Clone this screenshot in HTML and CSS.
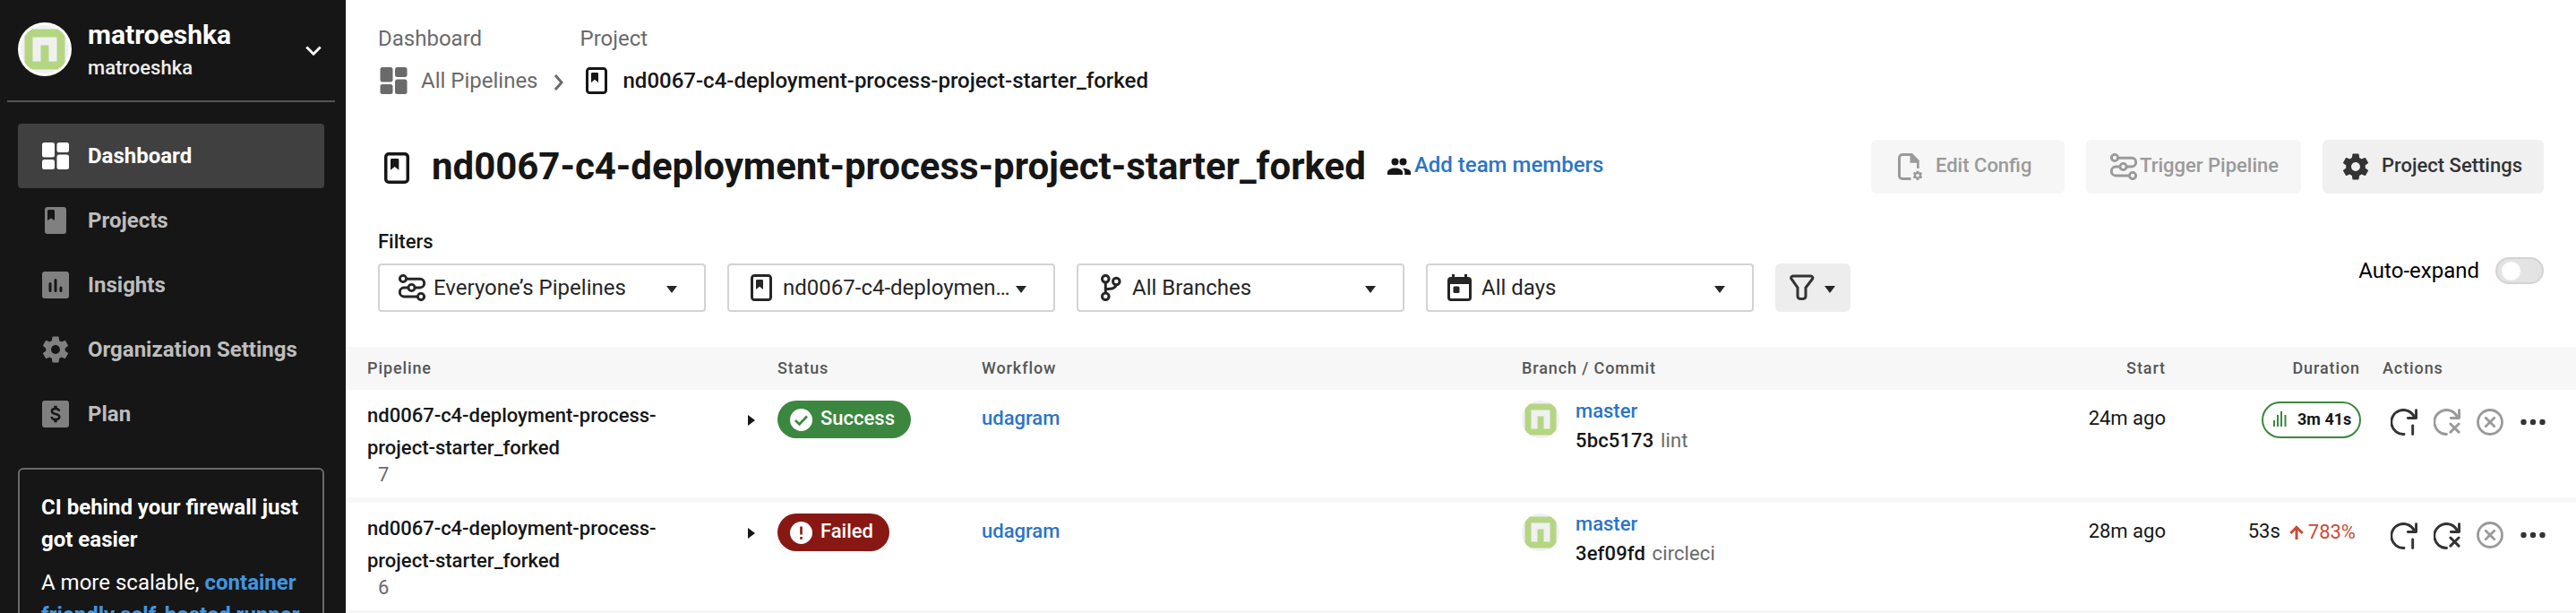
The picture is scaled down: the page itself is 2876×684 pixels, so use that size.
FILE: index.html
```
<!DOCTYPE html>
<html lang="en">
<head>
<meta charset="utf-8">
<title>Pipelines</title>
<link rel="stylesheet" href="styles.css">
</head>
<body>
<svg class="defs" width="0" height="0">
  <symbol id="dash" viewBox="0 0 30 30"><rect width="14" height="16.500" rx="2.500"/><rect y="19" width="14" height="11" rx="2.500"/><rect x="16.500" width="13.500" height="11" rx="2.500"/><rect x="16.500" y="13.500" width="13.500" height="16.500" rx="2.500"/></symbol>
  <symbol id="gear" viewBox="2.2 2 19.6 20"><path d="M19.14 12.94c.04-.3.06-.61.06-.94 0-.32-.02-.64-.07-.94l2.03-1.58c.18-.14.23-.41.12-.61l-1.92-3.32c-.12-.22-.37-.29-.59-.22l-2.39.96c-.5-.38-1.03-.7-1.62-.94l-.36-2.54c-.04-.24-.24-.41-.48-.41h-3.84c-.24 0-.43.17-.47.41l-.36 2.54c-.59.24-1.13.57-1.62.94l-2.39-.96c-.22-.08-.47 0-.59.22L2.74 8.87c-.12.21-.08.47.12.61l2.03 1.58c-.05.3-.09.63-.09.94s.02.64.07.94l-2.03 1.58c-.18.14-.23.41-.12.61l1.92 3.32c.12.22.37.29.59.22l2.39-.96c.5.38 1.03.7 1.62.94l.36 2.54c.05.24.24.41.48.41h3.84c.24 0 .44-.17.47-.41l.36-2.54c.59-.24 1.13-.56 1.62-.94l2.39.96c.22.08.47 0 .59-.22l1.92-3.32c.12-.22.07-.47-.12-.61l-2.01-1.58zM12 15.3c-1.82 0-3.3-1.48-3.3-3.3s1.48-3.3 3.3-3.3 3.3 1.48 3.3 3.3-1.48 3.3-3.3 3.3z"/></symbol>
  <symbol id="book" viewBox="0 0 24 30"><rect x="1.500" y="1.500" width="21" height="27" rx="2.800" fill="none" stroke="currentColor" stroke-width="3"/><path d="M6 7.200a1.200 1.200 0 0 1 1.200-1.200h5.600a1.200 1.200 0 0 1 1.200 1.200V17l-4-3.200L6 17z"/></symbol>
  <symbol id="pipe" viewBox="0 0 30 30"><g fill="none" stroke="currentColor" stroke-width="2.900"><circle cx="5" cy="5" r="3.600"/><circle cx="14.500" cy="15" r="3.600"/><circle cx="25" cy="25" r="3.600"/><path d="M8.500 5.200H24a4.700 4.700 0 0 1 4.600 4.700v.4A4.700 4.700 0 0 1 24 15h-6M11 15H6a4.700 4.700 0 0 0-4.600 4.700v.6A4.700 4.700 0 0 0 6 25h15.500"/></g></symbol>
  <symbol id="rerun" viewBox="0 0 31 31"><g fill="none" stroke="currentColor" stroke-width="3" stroke-linecap="round" stroke-linejoin="round"><path d="M15.500 29.500A14 14 0 1 1 27.500 9.500"/><path d="M29.500 1.800v9H20"/><path d="M25.500 19.500v10"/></g></symbol>
  <symbol id="rerunx" viewBox="0 0 31 31"><g fill="none" stroke="currentColor" stroke-width="3" stroke-linecap="round" stroke-linejoin="round"><path d="M15 29.500A14 14 0 1 1 27.500 9.500"/><path d="M29.500 1.800v9H20"/><path d="M19.500 17.500l9.500 9.500M29 17.500L19.500 27"/></g></symbol>
  <symbol id="cancel" viewBox="0 0 30 30"><g fill="none" stroke="currentColor" stroke-width="2.800" stroke-linecap="round"><circle cx="15" cy="15" r="13.500"/><path d="M10.200 10.200l9.600 9.600M19.800 10.200l-9.600 9.600"/></g></symbol>
  <symbol id="more" viewBox="0 0 28 8"><circle cx="3.500" cy="4" r="3.200"/><circle cx="14" cy="4" r="3.200"/><circle cx="24.500" cy="4" r="3.200"/></symbol>
  <symbol id="avatar" viewBox="0 0 42 42"><circle cx="21" cy="21" r="21" fill="#f0f0f0"/><clipPath id="av"><circle cx="21" cy="21" r="21"/></clipPath><g clip-path="url(#av)"><rect x="3.500" y="3.500" width="35" height="35" fill="#b4d683"/><path d="M10.500 10.500h21v21h-7v-14h-7v14h-7z" fill="#f0f0f0"/></g></symbol>
</svg>
<div class="app">
  <aside class="side">
    <div class="org">
      <span class="ring"><svg width="54" height="54"><use href="#avatar"/></svg></span>
      <div class="names"><b>matroeshka</b><span>matroeshka</span></div>
      <svg class="chev" width="18" height="12" viewBox="0 0 18 12"><path d="M1.300 1.500L9 9.200l7.700-7.700" fill="none" stroke="#fff" stroke-width="2.900"/></svg>
    </div>
    <nav class="nav">
      <a class="item active"><i><svg width="30" height="30"><use href="#dash"/></svg></i>Dashboard</a>
      <a class="item"><i><svg width="24" height="30" viewBox="0 0 24 30"><rect width="24" height="30" rx="3"/><path d="M3 4.500A1.500 1.500 0 0 1 4.500 3h5A1.500 1.500 0 0 1 11 4.500V15l-4-2.500L3 15z" fill="#161616"/></svg></i>Projects</a>
      <a class="item"><i><svg width="30" height="30" viewBox="0 0 30 30"><rect width="30" height="30" rx="3"/><path d="M9 13.500v8M15 9.500v12M21 18v3.500" stroke="#161616" stroke-width="3" stroke-linecap="round"/></svg></i>Insights</a>
      <a class="item"><i><svg width="30" height="30"><use href="#gear"/></svg></i>Organization Settings</a>
      <a class="item"><i><svg width="30" height="30" viewBox="0 0 30 30"><rect width="30" height="30" rx="3"/><path d="M19.200 11.800c-.3-1.800-1.800-2.800-4.200-2.800s-4.100 1-4.100 2.900c0 4.200 8.400 2.100 8.400 6.200 0 2-1.800 3-4.300 3s-4.200-1.100-4.400-3.100" fill="none" stroke="#161616" stroke-width="2.500"/><path d="M15 5.700v3.500M15 20.800v3.500" stroke="#161616" stroke-width="3.400"/></svg></i>Plan</a>
    </nav>
    <div class="promo"><h4>CI behind your firewall just got easier</h4><p>A more scalable, <b>container friendly self-hosted runner</b></p></div>
  </aside>
  <main class="main">
    <div class="crumbs">
      <div class="crumb all"><span class="lab">Dashboard</span><span class="val"><svg width="31" height="30"><use href="#dash"/></svg><span>All Pipelines</span></span></div>
      <svg class="sep" width="12" height="20" viewBox="0 0 12 20"><path d="M2 2l7 8-7 8" fill="none" stroke="#6a6a6a" stroke-width="3"/></svg>
      <div class="crumb cur"><span class="lab">Project</span><span class="val"><svg width="24" height="30"><use href="#book"/></svg><span>nd0067-c4-deployment-process-project-starter_forked</span></span></div>
    </div>
    <div class="titlebar">
      <svg class="ticon" width="28" height="35"><use href="#book"/></svg>
      <h1>nd0067-c4-deployment-process-project-starter_forked</h1>
      <a class="team"><svg width="26" height="20" viewBox="0 0 26 20"><circle cx="8.500" cy="4.500" r="4"/><circle cx="17.500" cy="4.500" r="4"/><path d="M0 19v-2.800c0-3 4.500-4.700 8.500-4.700s8.500 1.700 8.500 4.700V19zM19.300 19v-3c0-1.800-.8-3.200-2.200-4.300 4 0 8.900 1.500 8.900 4.500V19z"/></svg>Add team members</a>
      <div class="acts">
        <span class="btn off cfg"><svg width="28" height="31" viewBox="0 0 28 31"><path d="M14.500 28.500H5A3.500 3.500 0 0 1 1.500 25V5A3.500 3.500 0 0 1 5 1.500h10" fill="none" stroke="currentColor" stroke-width="3"/><path d="M13.500 0H16l7.700 8v9H21v-6.200h-7.500z"/><svg x="16.500" y="19.200" width="11" height="11"><use href="#gear"/></svg></svg>Edit Config</span>
        <span class="btn off trg"><svg width="30" height="30"><use href="#pipe"/></svg>Trigger Pipeline</span>
        <span class="btn set"><svg width="30" height="30"><use href="#gear"/></svg>Project Settings</span>
      </div>
    </div>
    <div class="filters">
      <div class="fgroup">
        <div class="flabel">Filters</div>
        <div class="frow">
          <div class="sel"><svg width="30" height="30"><use href="#pipe"/></svg><span>Everyone’s Pipelines</span><em></em></div>
          <div class="sel proj"><svg width="24" height="30"><use href="#book"/></svg><span>nd0067-c4-deploymen…</span><em></em></div>
          <div class="sel br"><svg width="24" height="30" viewBox="0 0 24 30"><g fill="none" stroke="currentColor" stroke-width="3"><circle cx="5.300" cy="5.200" r="3.800"/><circle cx="17.300" cy="8" r="3.800"/><circle cx="5.300" cy="24.800" r="3.800"/><path d="M5.300 9v12M17.300 11.800c-1.200 4-4.300 4.700-12 4.700"/></g></svg><span>All Branches</span><em></em></div>
          <div class="sel days"><svg width="27" height="30" viewBox="0 0 27 30"><rect x="1.500" y="4.500" width="24" height="24" rx="2.500" fill="none" stroke="currentColor" stroke-width="3"/><path d="M1 4h25v7H1zM5 0h3v5H5zM19 0h3v5h-3z"/><rect x="6.500" y="13.500" width="7" height="7.500" rx="1.500"/></svg><span>All days</span><em></em></div>
          <div class="funnel"><svg width="28" height="30" viewBox="0 0 28 30"><path d="M4 2h19.500c2 0 3 1.900 1.800 3.500L18 15v9.500c0 2-2 3-4.500 3S9 26.500 9 24.500V15L2.200 5.500C1 3.900 2 2 4 2z" fill="none" stroke="currentColor" stroke-width="3"/></svg><em></em></div>
        </div>
      </div>
      <div class="auto">Auto-expand<span class="switch"><i></i></span></div>
    </div>
    <div class="thead grid"><span>Pipeline</span><span></span><span>Status</span><span>Workflow</span><span>Branch / Commit</span><span class="r">Start</span><span class="r">Duration</span><span>Actions</span></div>
    <div class="row grid">
      <div class="pl"><b>nd0067-c4-deployment-process-project-starter_forked</b><small>7</small></div>
      <div class="exp"></div>
      <div><span class="badge ok"><svg width="25" height="25" viewBox="0 0 25 25"><circle cx="12.500" cy="12.500" r="12.500" fill="#fff"/><path d="M6 13l4.500 4.500L19 8.500" fill="none" stroke="#3c8740" stroke-width="2.600"/></svg>Success</span></div>
      <div class="wf">udagram</div>
      <div class="bc"><svg width="42" height="42"><use href="#avatar"/></svg><div><a>master</a><p><b>5bc5173</b> lint</p></div></div>
      <div class="start">24m ago</div>
      <div class="dur"><span class="pill"><svg width="15" height="17" viewBox="0 0 15 17"><path d="M1 10v7M5 4v13M9 0v17M13.500 4v13" stroke="#3c8740" stroke-width="2"/></svg>3m 41s</span></div>
      <div class="icons"><svg width="30" height="30"><use href="#rerun"/></svg><svg class="dim" width="30" height="30"><use href="#rerunx"/></svg><svg class="dim" width="30" height="30"><use href="#cancel"/></svg><svg width="28" height="8"><use href="#more"/></svg></div>
    </div>
    <div class="row grid">
      <div class="pl"><b>nd0067-c4-deployment-process-project-starter_forked</b><small>6</small></div>
      <div class="exp"></div>
      <div><span class="badge bad"><svg width="25" height="25" viewBox="0 0 25 25"><circle cx="12.500" cy="12.500" r="12.500" fill="#fff"/><path d="M12.500 5.500v9M12.500 17v2.700" stroke="#881814" stroke-width="2.600"/></svg>Failed</span></div>
      <div class="wf">udagram</div>
      <div class="bc"><svg width="42" height="42"><use href="#avatar"/></svg><div><a>master</a><p><b>3ef09fd</b> circleci</p></div></div>
      <div class="start">28m ago</div>
      <div class="dur up">53s<span><svg width="16" height="16" viewBox="0 0 16 16"><path d="M8 16V2.500M1.300 9L8 2.300 14.700 9" fill="none" stroke="#cb4a39" stroke-width="3"/></svg>783%</span></div>
      <div class="icons low"><svg width="30" height="30"><use href="#rerun"/></svg><svg width="30" height="30"><use href="#rerunx"/></svg><svg class="dim" width="30" height="30"><use href="#cancel"/></svg><svg width="28" height="8"><use href="#more"/></svg></div>
    </div>
  </main>
</div>
</body>
</html>
```
FILE: styles.css
```
* { box-sizing: border-box; margin: 0; padding: 0; }
body { font-family: Roboto, "Liberation Sans", sans-serif; font-size: 24px; line-height: 36px; color: #161616; background: #fff; width: 2876px; height: 684px; overflow: hidden; }
svg { fill: currentColor; flex: none; display: block; }
.defs { position: absolute; }
.app { display: flex; height: 684px; overflow: hidden; }

.side { width: 386px; flex: none; background: #161616; color: #fff; }
.org { height: 114px; margin: 0 12px 0 8px; border-bottom: 2px solid #555; display: flex; padding: 25px 15px 0 12px; }
.ring { width: 60px; height: 60px; border-radius: 50%; background: #fff; padding: 3px; flex: none; }
.names { margin-left: 18px; margin-top: -5px; flex: 1; }
.names b { display: block; font-size: 30px; line-height: 38px; font-weight: 700; }
.names span { display: block; font-size: 22px; line-height: 36px; color: #eee; font-weight: 500; }
.chev { margin-top: 26px; }
.nav { padding: 24px 24px 0 20px; }
.item { display: flex; align-items: center; height: 72px; border-radius: 4px; padding-left: 20px; font-weight: 700; color: #bdbdbd; }
.item i { width: 44px; margin-right: 14px; display: flex; justify-content: center; color: #808080; }
.item.active { background: #404040; color: #fff; }
.item.active i { color: #fff; }
.promo { margin: 24px 24px 0 20px; border: 2px solid #6a6a6a; border-radius: 6px; height: 240px; padding: 24px 20px 0 24px; }
.promo h4 { font-size: 24px; font-weight: 700; margin-bottom: 12px; }
.promo p b { color: #4196e0; }

.main { flex: 1; min-width: 0; }
.crumbs { display: flex; height: 146px; padding: 25px 0 0 36px; color: #6a6a6a; }
.crumb .lab { display: block; line-height: 36px; }
.crumb .val { display: flex; align-items: center; gap: 17px; margin-top: 11px; }
.all .val svg { margin-left: 2px; margin-right: -2px; }
.sep { margin: 57px 24px 0 17px; }
.cur .lab { margin-left: -6px; }
.cur .val { color: #161616; font-weight: 500; gap: 18px; }

.titlebar { display: flex; padding: 10px 36px 0 43px; height: 100px; }
.ticon { margin-top: 14px; }
h1 { font-size: 42px; line-height: 60px; margin-left: 25px; font-weight: 700; letter-spacing: -0.03px; }
.team { display: flex; color: #2b74c7; font-weight: 500; font-size: 24px; line-height: 56px; margin-left: 24px; gap: 4px; }
.team svg { color: #161616; margin-top: 20px; }
.acts { margin-left: auto; display: flex; gap: 24px; }
.btn { height: 60px; border-radius: 6px; background: #f0f0f0; color: #333; font-weight: 500; font-size: 22px; line-height: 57px; display: flex; }
.btn svg { margin-top: 15px; }
.btn svg svg { margin: 0; }
.btn.off { background: #f6f6f6; color: #9a9a9a; }
.cfg { width: 216px; padding-left: 30px; gap: 14px; }
.trg { width: 240px; padding-left: 27px; gap: 3px; }
.set { width: 247px; padding-left: 22px; gap: 14px; }

.filters { display: flex; height: 141px; padding: 5px 36px 0; justify-content: space-between; }
.flabel { font-weight: 500; font-size: 22px; line-height: 37px; height: 43px; }
.frow { display: flex; gap: 24px; }
.sel { width: 366px; height: 54px; border: 2px solid #d3d3d3; border-radius: 4px; display: flex; align-items: center; padding: 0 30px 0 21px; color: #262626; }
.sel span { margin-left: 9px; line-height: 30px; }
.proj { padding-left: 24px; }
.proj span { margin-left: 12px; }
.br { padding-left: 25px; }
.br span { margin-left: 11px; }
.days { padding-left: 22px; }
.days span { margin-left: 11px; }
em { margin-left: auto; margin-top: 3px; width: 0; border: 6.5px solid transparent; border-top: 8px solid #262626; border-bottom: 0; }
.funnel { width: 84px; height: 54px; border-radius: 6px; background: #ededed; display: flex; align-items: center; padding: 0 17px 0 16px; color: #333; }
.auto { display: flex; margin-top: 33px; height: 36px; line-height: 36px; color: #000; gap: 18px; }
.switch { width: 54px; height: 30px; margin-top: 3px; border-radius: 15px; border: 2px solid #d3d3d3; background: #e3e3e3; padding: 3px 5px; }
.switch i { display: block; width: 21px; height: 21px; border-radius: 50%; background: #fff; }

.grid { display: grid; grid-template-columns: 420px 38px 228px 603px 500px 219px 217px 1fr; padding-left: 24px; }
.thead { background: #f7f7f7; height: 48px; line-height: 48px; font-size: 18px; font-weight: 500; color: #555; letter-spacing: 0.9px; }
.r { text-align: right; }
.thead span:last-child { padding-left: 25px; }
.row { height: 126px; border-bottom: 6px solid #f7f7f7; }
.pl { padding-top: 11px; }
.pl b { display: block; font-size: 22px; font-weight: 500; width: 340px; }
.pl small { display: block; font-size: 22px; line-height: 24px; margin-left: 12px; color: #6a6a6a; }
.exp { width: 0; height: 0; margin-top: 28px; margin-left: 5px; border: 6.5px solid transparent; border-left: 8px solid #161616; border-right: 0; }
.badge { display: inline-flex; margin-top: 12px; height: 42px; border-radius: 21px; color: #fff; font-weight: 500; font-size: 22px; line-height: 39px; padding: 0 18px 0 14px; gap: 9px; }
.badge svg { margin-top: 9px; }
.ok { background: #3c8740; }
.bad { background: #881814; }
.wf { font-weight: 500; color: #2b74c7; padding-top: 14px; font-size: 22px; }
.bc { display: flex; padding-top: 12px; gap: 18px; font-size: 22px; }
.bc a { display: block; color: #2b74c7; font-weight: 500; line-height: 23px; }
.bc p { color: #6a6a6a; line-height: 36px; margin-top: 4px; letter-spacing: 0.1px; }
.bc b { color: #161616; font-weight: 500; margin-right: 2px; letter-spacing: 0.15px; }
.start { text-align: right; padding-top: 14px; font-size: 22px; }
.dur { display: flex; justify-content: flex-end; padding-top: 13px; font-size: 22px; }
.pill { width: 111px; height: 41px; border: 2px solid #3c8740; border-radius: 21px; display: flex; font-size: 18px; font-weight: 700; line-height: 36px; padding-left: 11px; gap: 12px; margin-right: -1px; }
.pill svg { margin-top: 9px; }
.up { padding: 14px 5px 0 0; gap: 10px; }
.up span { display: flex; color: #cb4a39; gap: 5px; line-height: 37px; }
.up svg { margin-top: 11px; }
.icons { display: flex; align-items: center; height: 30px; margin-top: 21px; padding-left: 34px; gap: 18px; color: #333; }
.icons.low svg:nth-child(-n+2) { margin-top: 2px; }
.icons .dim { color: #9a9a9a; }
.icons svg:last-child { margin-left: 1px; }
```
